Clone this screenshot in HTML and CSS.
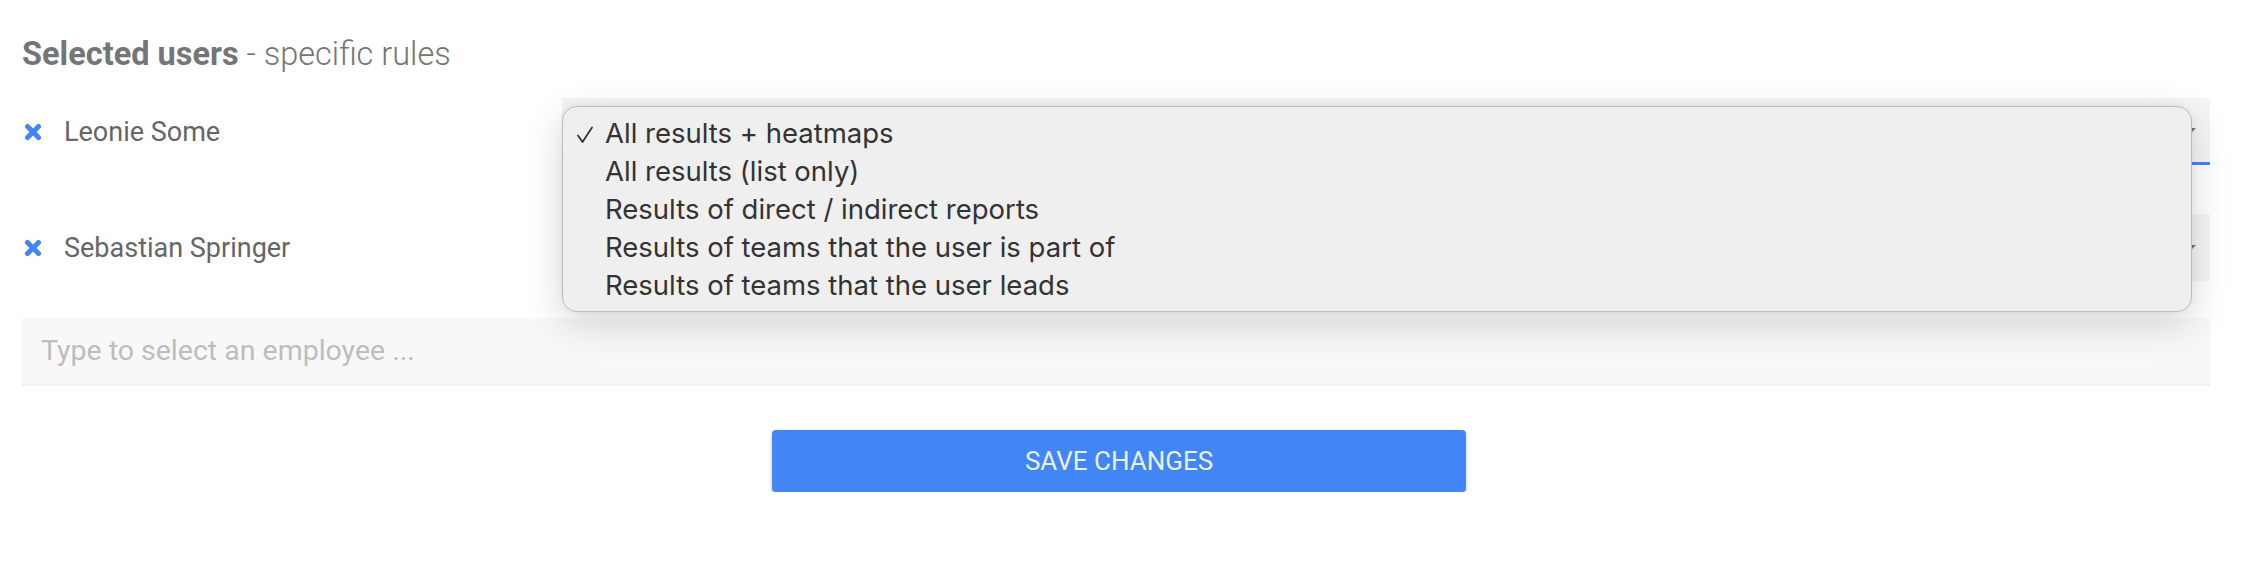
FILE: index.html
```html
<!DOCTYPE html>
<html lang="en">
<head>
<meta charset="utf-8">
<title>Selected users</title>
<link rel="stylesheet" href="styles.css">
</head>
<body>
<div class="page">
  <h2 class="title"><strong>Selected users</strong> - specific rules</h2>

  <div class="rule-row row-first">
    <div class="user">
      <svg class="remove" viewBox="0 0 18 18" width="18" height="18"><path d="M3.5 3.5 L14.5 14.5 M14.5 3.5 L3.5 14.5" stroke="#4285f4" stroke-width="5" stroke-linecap="round"/></svg>
      <span class="name">Leonie Some</span>
    </div>
    <div class="select focused"><span class="arrow"></span></div>
  </div>

  <div class="rule-row row-second">
    <div class="user">
      <svg class="remove" viewBox="0 0 18 18" width="18" height="18"><path d="M3.5 3.5 L14.5 14.5 M14.5 3.5 L3.5 14.5" stroke="#4285f4" stroke-width="5" stroke-linecap="round"/></svg>
      <span class="name">Sebastian Springer</span>
    </div>
    <div class="select"><span class="arrow"></span></div>
  </div>

  <div class="employee-input">Type to select an employee ...</div>

  <div class="actions">
    <button class="save">SAVE CHANGES</button>
  </div>

  <ul class="menu">
    <li class="selected"><svg class="check" viewBox="0 0 18 18" width="18" height="18"><path d="M2 9.5 L6.5 16 L16 1.5" fill="none" stroke="#333333" stroke-width="1.8" stroke-linecap="round" stroke-linejoin="round"/></svg>All results + heatmaps</li>
    <li>All results (list only)</li>
    <li>Results of direct / indirect reports</li>
    <li>Results of teams that the user is part of</li>
    <li>Results of teams that the user leads</li>
  </ul>
</div>
</body>
</html>
```

FILE: styles.css
```css
html, body {
  margin: 0;
  padding: 0;
  background: #ffffff;
}

.page {
  position: relative;
  width: 2188px;
  padding: 35px 0 0 22px;
  font-family: Roboto, "Liberation Sans", sans-serif;
}

.title {
  margin: 0;
  font-size: 32.5px;
  line-height: 38px;
  font-weight: 300;
  color: #757575;
}

.title strong {
  font-weight: 700;
}

.rule-row {
  display: flex;
  align-items: center;
  height: 67px;
}

.row-first {
  margin-top: 25px;
}

.row-second {
  margin-top: 49px;
}

.user {
  display: flex;
  align-items: center;
  width: 538px;
  padding-left: 2px;
}

.remove {
  display: block;
  flex: none;
}

.name {
  margin-left: 22px;
  font-size: 27px;
  color: #666666;
}

.select {
  flex: 1;
  height: 100%;
  box-sizing: border-box;
  background: #f5f5f5;
  display: flex;
  align-items: center;
  justify-content: flex-end;
  padding-right: 14px;
}

.select.focused {
  border-bottom: 3px solid #4285f4;
}

.arrow {
  width: 0;
  height: 0;
  border-left: 5px solid transparent;
  border-right: 5px solid transparent;
  border-top: 5px solid #757575;
}

.employee-input {
  margin-top: 37px;
  height: 68px;
  box-sizing: border-box;
  background: #f8f8f8;
  border-bottom: 2px solid #f1f1f1;
  padding-left: 19px;
  font-size: 28.5px;
  line-height: 66px;
  color: #bdbdbd;
}

.actions {
  display: flex;
  justify-content: center;
  margin-top: 44px;
  padding-left: 6px;
}

.save {
  width: 694px;
  height: 62px;
  border: none;
  border-radius: 4px;
  background: #4285f4;
  color: #eaf1fe;
  font-family: Roboto, "Liberation Sans", sans-serif;
  font-size: 26px;
  letter-spacing: 0;
  box-shadow: 0 3px 4px rgba(0, 0, 0, 0.22);
}

.menu {
  position: absolute;
  left: 562px;
  top: 106px;
  width: 1630px;
  height: 206px;
  box-sizing: border-box;
  margin: 0;
  padding: 7px 0 8px 0;
  list-style: none;
  background: #efeff0;
  border: 1px solid #bdbdbd;
  border-radius: 15px;
  box-shadow: 0 12px 40px rgba(0, 0, 0, 0.16), 0 0 6px rgba(0, 0, 0, 0.06);
  font-family: Inter, "Noto Sans", sans-serif;
  font-size: 27.5px;
  line-height: 38px;
  color: #333333;
}

.menu li {
  position: relative;
  padding-left: 42px;
}

.check {
  position: absolute;
  left: 13px;
  top: 12px;
}
```
